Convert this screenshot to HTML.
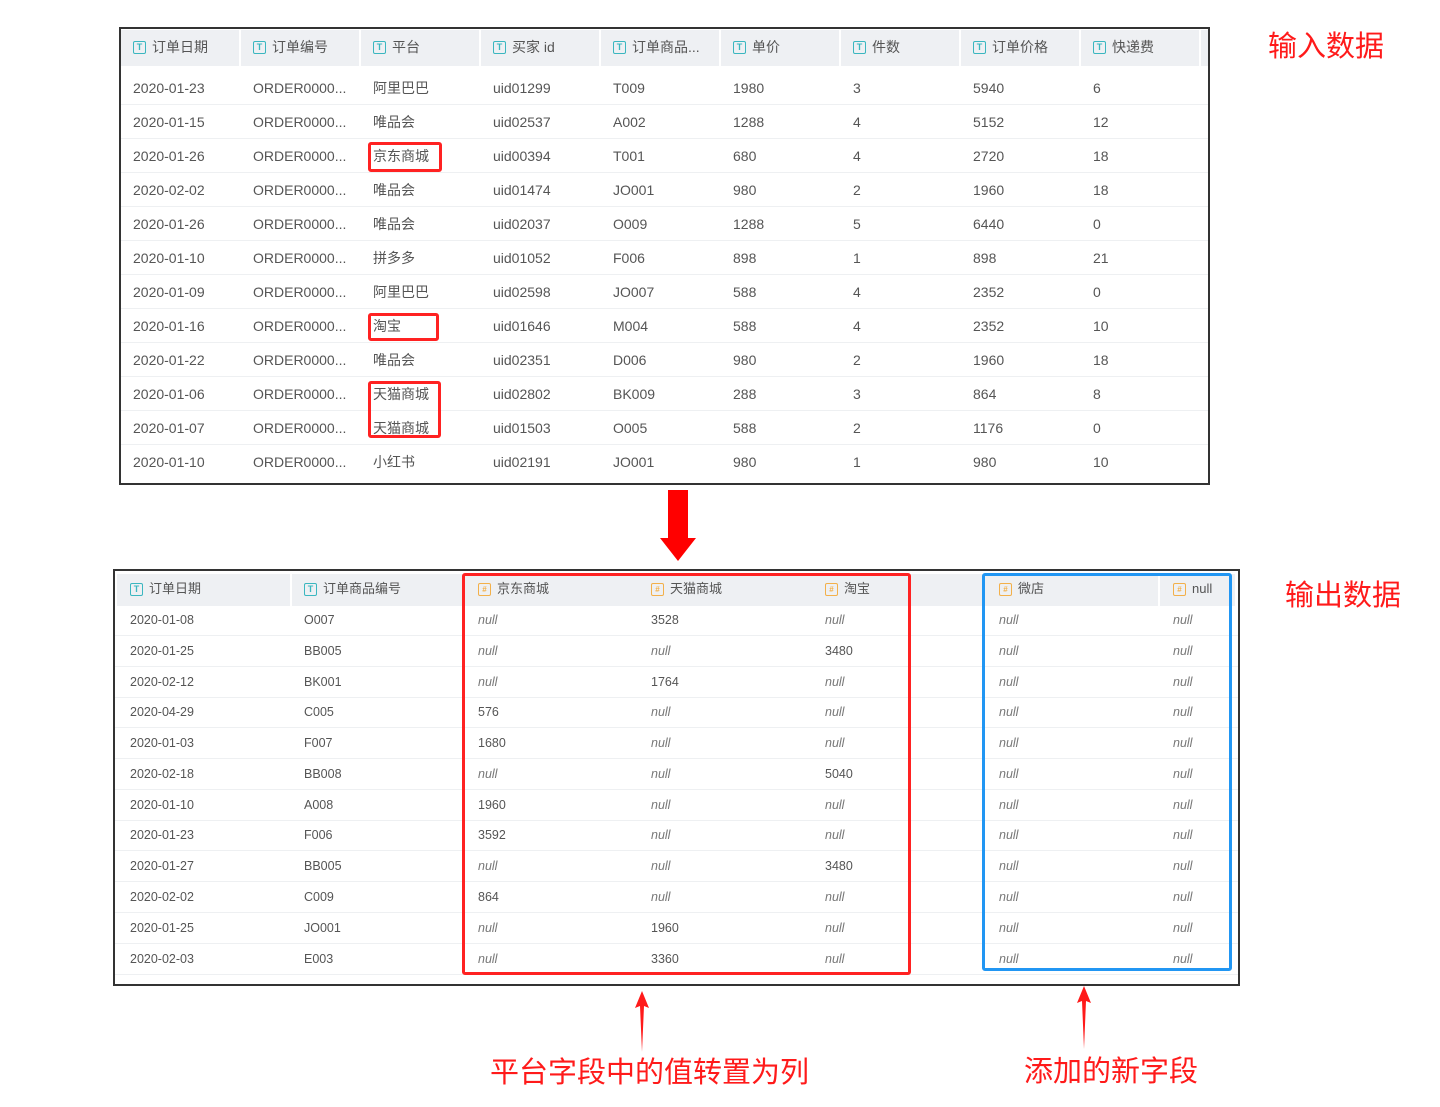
<!DOCTYPE html>
<html><head><meta charset="utf-8">
<style>
*{margin:0;padding:0;box-sizing:border-box}
body{width:1440px;height:1107px;background:#fff;position:relative;overflow:hidden;font-family:"Liberation Sans","Noto Sans CJK SC",sans-serif;color:#555}
.a{position:absolute;white-space:nowrap}
.t1{position:absolute;left:119px;top:27px;width:1091px;height:458px;border:2px solid #333;background:#fff}
.t2{position:absolute;left:113px;top:569px;width:1127px;height:417px;border:2px solid #333;background:#fff}
.row{position:absolute;left:0;right:0;border-bottom:1px solid #eef0f2}
.c{position:absolute;font-size:14px;color:#555;white-space:nowrap;line-height:18px;height:18px;display:flex;align-items:center}
.h{position:absolute;top:0;background:#eef0f3}
.ic{display:inline-flex;align-items:center;justify-content:center;width:13px;height:13px;border:1.5px solid #3bb7c0;border-radius:2px;font-size:9px;line-height:9px;color:#3bb7c0;font-weight:bold;margin-right:6px;flex:none}
.ic.o{border-color:#f3b04a;color:#f3b04a;font-size:8px}
.n{font-style:italic;color:#777}
.rb{position:absolute;border:3px solid #f22;border-radius:3px}
.lab{position:absolute;color:#ff1a1a;font-size:29px;white-space:nowrap;line-height:40px}
.sep{position:absolute;top:1px;width:2px;height:36px;background:#fff}
</style></head><body>

<div class="t1">
 <div class="h" style="left:0;width:1087px;height:36px;top:1px"></div>
 <div class="sep" style="left:118px"></div><div class="sep" style="left:238px"></div><div class="sep" style="left:358px"></div><div class="sep" style="left:478px"></div><div class="sep" style="left:598px"></div><div class="sep" style="left:718px"></div><div class="sep" style="left:838px"></div><div class="sep" style="left:958px"></div><div class="sep" style="left:1078px"></div>
 <div class="c" style="top:9px;left:12px"><span class="ic">T</span>订单日期</div>
 <div class="c" style="top:9px;left:132px"><span class="ic">T</span>订单编号</div>
 <div class="c" style="top:9px;left:252px"><span class="ic">T</span>平台</div>
 <div class="c" style="top:9px;left:372px"><span class="ic">T</span>买家 id</div>
 <div class="c" style="top:9px;left:492px"><span class="ic">T</span>订单商品...</div>
 <div class="c" style="top:9px;left:612px"><span class="ic">T</span>单价</div>
 <div class="c" style="top:9px;left:732px"><span class="ic">T</span>件数</div>
 <div class="c" style="top:9px;left:852px"><span class="ic">T</span>订单价格</div>
 <div class="c" style="top:9px;left:972px"><span class="ic">T</span>快递费</div>
</div>

<div class="a" style="left:121px;top:71px;width:1087px">
<div style="position:relative;height:408px">
<div class="row" style="top:0;height:34px"><span class="c" style="left:12px;top:8px">2020-01-23</span><span class="c" style="left:132px;top:8px">ORDER0000...</span><span class="c" style="left:252px;top:8px">阿里巴巴</span><span class="c" style="left:372px;top:8px">uid01299</span><span class="c" style="left:492px;top:8px">T009</span><span class="c" style="left:612px;top:8px">1980</span><span class="c" style="left:732px;top:8px">3</span><span class="c" style="left:852px;top:8px">5940</span><span class="c" style="left:972px;top:8px">6</span></div>
<div class="row" style="top:34px;height:34px"><span class="c" style="left:12px;top:8px">2020-01-15</span><span class="c" style="left:132px;top:8px">ORDER0000...</span><span class="c" style="left:252px;top:8px">唯品会</span><span class="c" style="left:372px;top:8px">uid02537</span><span class="c" style="left:492px;top:8px">A002</span><span class="c" style="left:612px;top:8px">1288</span><span class="c" style="left:732px;top:8px">4</span><span class="c" style="left:852px;top:8px">5152</span><span class="c" style="left:972px;top:8px">12</span></div>
<div class="row" style="top:68px;height:34px"><span class="c" style="left:12px;top:8px">2020-01-26</span><span class="c" style="left:132px;top:8px">ORDER0000...</span><span class="c" style="left:252px;top:8px">京东商城</span><span class="c" style="left:372px;top:8px">uid00394</span><span class="c" style="left:492px;top:8px">T001</span><span class="c" style="left:612px;top:8px">680</span><span class="c" style="left:732px;top:8px">4</span><span class="c" style="left:852px;top:8px">2720</span><span class="c" style="left:972px;top:8px">18</span></div>
<div class="row" style="top:102px;height:34px"><span class="c" style="left:12px;top:8px">2020-02-02</span><span class="c" style="left:132px;top:8px">ORDER0000...</span><span class="c" style="left:252px;top:8px">唯品会</span><span class="c" style="left:372px;top:8px">uid01474</span><span class="c" style="left:492px;top:8px">JO001</span><span class="c" style="left:612px;top:8px">980</span><span class="c" style="left:732px;top:8px">2</span><span class="c" style="left:852px;top:8px">1960</span><span class="c" style="left:972px;top:8px">18</span></div>
<div class="row" style="top:136px;height:34px"><span class="c" style="left:12px;top:8px">2020-01-26</span><span class="c" style="left:132px;top:8px">ORDER0000...</span><span class="c" style="left:252px;top:8px">唯品会</span><span class="c" style="left:372px;top:8px">uid02037</span><span class="c" style="left:492px;top:8px">O009</span><span class="c" style="left:612px;top:8px">1288</span><span class="c" style="left:732px;top:8px">5</span><span class="c" style="left:852px;top:8px">6440</span><span class="c" style="left:972px;top:8px">0</span></div>
<div class="row" style="top:170px;height:34px"><span class="c" style="left:12px;top:8px">2020-01-10</span><span class="c" style="left:132px;top:8px">ORDER0000...</span><span class="c" style="left:252px;top:8px">拼多多</span><span class="c" style="left:372px;top:8px">uid01052</span><span class="c" style="left:492px;top:8px">F006</span><span class="c" style="left:612px;top:8px">898</span><span class="c" style="left:732px;top:8px">1</span><span class="c" style="left:852px;top:8px">898</span><span class="c" style="left:972px;top:8px">21</span></div>
<div class="row" style="top:204px;height:34px"><span class="c" style="left:12px;top:8px">2020-01-09</span><span class="c" style="left:132px;top:8px">ORDER0000...</span><span class="c" style="left:252px;top:8px">阿里巴巴</span><span class="c" style="left:372px;top:8px">uid02598</span><span class="c" style="left:492px;top:8px">JO007</span><span class="c" style="left:612px;top:8px">588</span><span class="c" style="left:732px;top:8px">4</span><span class="c" style="left:852px;top:8px">2352</span><span class="c" style="left:972px;top:8px">0</span></div>
<div class="row" style="top:238px;height:34px"><span class="c" style="left:12px;top:8px">2020-01-16</span><span class="c" style="left:132px;top:8px">ORDER0000...</span><span class="c" style="left:252px;top:8px">淘宝</span><span class="c" style="left:372px;top:8px">uid01646</span><span class="c" style="left:492px;top:8px">M004</span><span class="c" style="left:612px;top:8px">588</span><span class="c" style="left:732px;top:8px">4</span><span class="c" style="left:852px;top:8px">2352</span><span class="c" style="left:972px;top:8px">10</span></div>
<div class="row" style="top:272px;height:34px"><span class="c" style="left:12px;top:8px">2020-01-22</span><span class="c" style="left:132px;top:8px">ORDER0000...</span><span class="c" style="left:252px;top:8px">唯品会</span><span class="c" style="left:372px;top:8px">uid02351</span><span class="c" style="left:492px;top:8px">D006</span><span class="c" style="left:612px;top:8px">980</span><span class="c" style="left:732px;top:8px">2</span><span class="c" style="left:852px;top:8px">1960</span><span class="c" style="left:972px;top:8px">18</span></div>
<div class="row" style="top:306px;height:34px"><span class="c" style="left:12px;top:8px">2020-01-06</span><span class="c" style="left:132px;top:8px">ORDER0000...</span><span class="c" style="left:252px;top:8px">天猫商城</span><span class="c" style="left:372px;top:8px">uid02802</span><span class="c" style="left:492px;top:8px">BK009</span><span class="c" style="left:612px;top:8px">288</span><span class="c" style="left:732px;top:8px">3</span><span class="c" style="left:852px;top:8px">864</span><span class="c" style="left:972px;top:8px">8</span></div>
<div class="row" style="top:340px;height:34px"><span class="c" style="left:12px;top:8px">2020-01-07</span><span class="c" style="left:132px;top:8px">ORDER0000...</span><span class="c" style="left:252px;top:8px">天猫商城</span><span class="c" style="left:372px;top:8px">uid01503</span><span class="c" style="left:492px;top:8px">O005</span><span class="c" style="left:612px;top:8px">588</span><span class="c" style="left:732px;top:8px">2</span><span class="c" style="left:852px;top:8px">1176</span><span class="c" style="left:972px;top:8px">0</span></div>
<div class="row" style="top:374px;height:34px;border:none"><span class="c" style="left:12px;top:8px">2020-01-10</span><span class="c" style="left:132px;top:8px">ORDER0000...</span><span class="c" style="left:252px;top:8px">小红书</span><span class="c" style="left:372px;top:8px">uid02191</span><span class="c" style="left:492px;top:8px">JO001</span><span class="c" style="left:612px;top:8px">980</span><span class="c" style="left:732px;top:8px">1</span><span class="c" style="left:852px;top:8px">980</span><span class="c" style="left:972px;top:8px">10</span></div>
</div></div>

<div class="rb" style="left:368px;top:142px;width:74px;height:30px"></div>
<div class="rb" style="left:368px;top:313px;width:71px;height:28px"></div>
<div class="rb" style="left:368px;top:381px;width:73px;height:57px"></div>

<svg class="a" style="left:655px;top:488px" width="46" height="76"><polygon points="13,2 33,2 33,50 41,50 23,73 5,50 13,50" fill="#ff0000"/></svg>

<div class="t2">
 <div class="h" style="left:2px;width:1118px;height:32px;top:3px"></div>
 <div style="position:absolute;left:175px;top:3px;width:2px;height:32px;background:#fff"></div>
 <div style="position:absolute;left:1043px;top:3px;width:2px;height:32px;background:#fff"></div>
</div>
<div class="a" style="left:115px;top:571px;width:1123px;height:413px">
<div style="position:relative">
 <span class="c" style="left:15px;top:9px;font-size:13px"><span class="ic">T</span>订单日期</span>
 <span class="c" style="left:189px;top:9px;font-size:13px"><span class="ic">T</span>订单商品编号</span>
 <span class="c" style="left:363px;top:9px;font-size:13px"><span class="ic o">#</span>京东商城</span>
 <span class="c" style="left:536px;top:9px;font-size:13px"><span class="ic o">#</span>天猫商城</span>
 <span class="c" style="left:710px;top:9px;font-size:13px"><span class="ic o">#</span>淘宝</span>
 <span class="c" style="left:884px;top:9px;font-size:13px"><span class="ic o">#</span>微店</span>
 <span class="c" style="left:1058px;top:9px;font-size:13px"><span class="ic o">#</span>null</span>
</div></div>

<div class="a" style="left:115px;top:605px;width:1123px">
<div style="position:relative;height:370px">
<div class="row" style="top:0;height:31px"><span class="c" style="left:15px;top:6px;font-size:12.5px">2020-01-08</span><span class="c" style="left:189px;top:6px;font-size:12.5px">O007</span><span class="c n" style="left:363px;top:6px;font-size:12.5px">null</span><span class="c" style="left:536px;top:6px;font-size:12.5px">3528</span><span class="c n" style="left:710px;top:6px;font-size:12.5px">null</span><span class="c n" style="left:884px;top:6px;font-size:12.5px">null</span><span class="c n" style="left:1058px;top:6px;font-size:12.5px">null</span></div>
<div class="row" style="top:31px;height:31px"><span class="c" style="left:15px;top:6px;font-size:12.5px">2020-01-25</span><span class="c" style="left:189px;top:6px;font-size:12.5px">BB005</span><span class="c n" style="left:363px;top:6px;font-size:12.5px">null</span><span class="c n" style="left:536px;top:6px;font-size:12.5px">null</span><span class="c" style="left:710px;top:6px;font-size:12.5px">3480</span><span class="c n" style="left:884px;top:6px;font-size:12.5px">null</span><span class="c n" style="left:1058px;top:6px;font-size:12.5px">null</span></div>
<div class="row" style="top:62px;height:31px"><span class="c" style="left:15px;top:6px;font-size:12.5px">2020-02-12</span><span class="c" style="left:189px;top:6px;font-size:12.5px">BK001</span><span class="c n" style="left:363px;top:6px;font-size:12.5px">null</span><span class="c" style="left:536px;top:6px;font-size:12.5px">1764</span><span class="c n" style="left:710px;top:6px;font-size:12.5px">null</span><span class="c n" style="left:884px;top:6px;font-size:12.5px">null</span><span class="c n" style="left:1058px;top:6px;font-size:12.5px">null</span></div>
<div class="row" style="top:92px;height:31px"><span class="c" style="left:15px;top:6px;font-size:12.5px">2020-04-29</span><span class="c" style="left:189px;top:6px;font-size:12.5px">C005</span><span class="c" style="left:363px;top:6px;font-size:12.5px">576</span><span class="c n" style="left:536px;top:6px;font-size:12.5px">null</span><span class="c n" style="left:710px;top:6px;font-size:12.5px">null</span><span class="c n" style="left:884px;top:6px;font-size:12.5px">null</span><span class="c n" style="left:1058px;top:6px;font-size:12.5px">null</span></div>
<div class="row" style="top:123px;height:31px"><span class="c" style="left:15px;top:6px;font-size:12.5px">2020-01-03</span><span class="c" style="left:189px;top:6px;font-size:12.5px">F007</span><span class="c" style="left:363px;top:6px;font-size:12.5px">1680</span><span class="c n" style="left:536px;top:6px;font-size:12.5px">null</span><span class="c n" style="left:710px;top:6px;font-size:12.5px">null</span><span class="c n" style="left:884px;top:6px;font-size:12.5px">null</span><span class="c n" style="left:1058px;top:6px;font-size:12.5px">null</span></div>
<div class="row" style="top:154px;height:31px"><span class="c" style="left:15px;top:6px;font-size:12.5px">2020-02-18</span><span class="c" style="left:189px;top:6px;font-size:12.5px">BB008</span><span class="c n" style="left:363px;top:6px;font-size:12.5px">null</span><span class="c n" style="left:536px;top:6px;font-size:12.5px">null</span><span class="c" style="left:710px;top:6px;font-size:12.5px">5040</span><span class="c n" style="left:884px;top:6px;font-size:12.5px">null</span><span class="c n" style="left:1058px;top:6px;font-size:12.5px">null</span></div>
<div class="row" style="top:185px;height:31px"><span class="c" style="left:15px;top:6px;font-size:12.5px">2020-01-10</span><span class="c" style="left:189px;top:6px;font-size:12.5px">A008</span><span class="c" style="left:363px;top:6px;font-size:12.5px">1960</span><span class="c n" style="left:536px;top:6px;font-size:12.5px">null</span><span class="c n" style="left:710px;top:6px;font-size:12.5px">null</span><span class="c n" style="left:884px;top:6px;font-size:12.5px">null</span><span class="c n" style="left:1058px;top:6px;font-size:12.5px">null</span></div>
<div class="row" style="top:215px;height:31px"><span class="c" style="left:15px;top:6px;font-size:12.5px">2020-01-23</span><span class="c" style="left:189px;top:6px;font-size:12.5px">F006</span><span class="c" style="left:363px;top:6px;font-size:12.5px">3592</span><span class="c n" style="left:536px;top:6px;font-size:12.5px">null</span><span class="c n" style="left:710px;top:6px;font-size:12.5px">null</span><span class="c n" style="left:884px;top:6px;font-size:12.5px">null</span><span class="c n" style="left:1058px;top:6px;font-size:12.5px">null</span></div>
<div class="row" style="top:246px;height:31px"><span class="c" style="left:15px;top:6px;font-size:12.5px">2020-01-27</span><span class="c" style="left:189px;top:6px;font-size:12.5px">BB005</span><span class="c n" style="left:363px;top:6px;font-size:12.5px">null</span><span class="c n" style="left:536px;top:6px;font-size:12.5px">null</span><span class="c" style="left:710px;top:6px;font-size:12.5px">3480</span><span class="c n" style="left:884px;top:6px;font-size:12.5px">null</span><span class="c n" style="left:1058px;top:6px;font-size:12.5px">null</span></div>
<div class="row" style="top:277px;height:31px"><span class="c" style="left:15px;top:6px;font-size:12.5px">2020-02-02</span><span class="c" style="left:189px;top:6px;font-size:12.5px">C009</span><span class="c" style="left:363px;top:6px;font-size:12.5px">864</span><span class="c n" style="left:536px;top:6px;font-size:12.5px">null</span><span class="c n" style="left:710px;top:6px;font-size:12.5px">null</span><span class="c n" style="left:884px;top:6px;font-size:12.5px">null</span><span class="c n" style="left:1058px;top:6px;font-size:12.5px">null</span></div>
<div class="row" style="top:308px;height:31px"><span class="c" style="left:15px;top:6px;font-size:12.5px">2020-01-25</span><span class="c" style="left:189px;top:6px;font-size:12.5px">JO001</span><span class="c n" style="left:363px;top:6px;font-size:12.5px">null</span><span class="c" style="left:536px;top:6px;font-size:12.5px">1960</span><span class="c n" style="left:710px;top:6px;font-size:12.5px">null</span><span class="c n" style="left:884px;top:6px;font-size:12.5px">null</span><span class="c n" style="left:1058px;top:6px;font-size:12.5px">null</span></div>
<div class="row" style="top:339px;height:31px"><span class="c" style="left:15px;top:6px;font-size:12.5px">2020-02-03</span><span class="c" style="left:189px;top:6px;font-size:12.5px">E003</span><span class="c n" style="left:363px;top:6px;font-size:12.5px">null</span><span class="c" style="left:536px;top:6px;font-size:12.5px">3360</span><span class="c n" style="left:710px;top:6px;font-size:12.5px">null</span><span class="c n" style="left:884px;top:6px;font-size:12.5px">null</span><span class="c n" style="left:1058px;top:6px;font-size:12.5px">null</span></div>
</div></div>

<div class="rb" style="left:462px;top:573px;width:449px;height:402px"></div>
<div class="rb" style="left:982px;top:573px;width:250px;height:398px;border-color:#2196f3"></div>

<svg class="a" style="left:633px;top:990px" width="18" height="64"><polygon points="9,1 16,18 11,16 9,62 7,16 2,18" fill="#ff1a1a"/></svg>
<svg class="a" style="left:1075px;top:985px" width="18" height="66"><polygon points="9,1 16,18 11,16 9,64 7,16 2,18" fill="#ff1a1a"/></svg>

<div class="lab" style="left:1268px;top:27px">输入数据</div>
<div class="lab" style="left:1285px;top:576px">输出数据</div>
<div class="lab" style="left:490px;top:1053px">平台字段中的值转置为列</div>
<div class="lab" style="left:1024px;top:1052px">添加的新字段</div>
</body></html>
